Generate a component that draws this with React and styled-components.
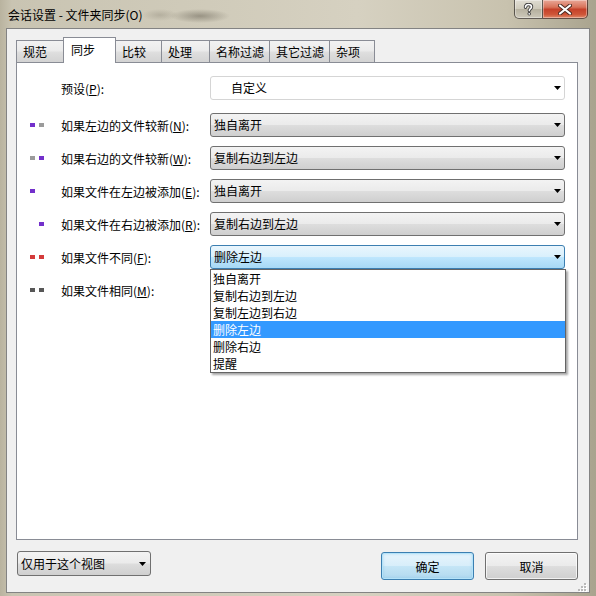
import React from 'react';
import styled, { createGlobalStyle, css } from 'styled-components';

const GlobalStyle = createGlobalStyle`
  html, body {
    margin: 0;
    padding: 0;
  }
  body {
    font-family: "Noto Sans CJK SC", "Noto Sans", sans-serif;
    font-size: 12px;
    color: #000;
    background: #c9c3b0;
  }
`;

const Window = styled.div`
  width: 596px;
  height: 596px;
  box-sizing: border-box;
  display: flex;
  flex-direction: column;
  overflow: hidden;
  background:
    radial-gradient(ellipse 30px 7px at 200px 16px, rgba(70, 64, 52, 0.4), transparent),
    radial-gradient(ellipse 18px 6px at 160px 15px, rgba(90, 84, 70, 0.22), transparent),
    linear-gradient(90deg, #b9b39f 0%, #c9c4b2 2%, #d0cbba 35%, #d6d1c1 60%, #c8c2ae 85%, #a9a38e 100%);
`;

const TitleBar = styled.div`
  height: 28px;
  flex: none;
  display: flex;
  align-items: flex-start;
  padding: 0 8px;
`;

const TitleText = styled.div`
  line-height: 28px;
  padding-top: 1px;
  white-space: nowrap;
`;

const CaptionButtons = styled.div`
  margin-left: auto;
  display: flex;
`;

const CaptionButton = styled.div`
  height: 19px;
  box-sizing: border-box;
  border: 1px solid rgba(55, 50, 45, 0.75);
  border-top: none;
  display: flex;
  align-items: center;
  justify-content: center;
  box-shadow: inset 0 0 0 1px rgba(255, 255, 255, 0.35);
  ${(p) =>
    p.$close
      ? css`
          width: 45px;
          border-left: none;
          border-radius: 0 0 5px 0;
          background: linear-gradient(#e9a898 0%, #d8735a 40%, #c5412a 52%, #cf5538 80%, #e08a6a 100%);
        `
      : css`
          width: 29px;
          border-radius: 0 0 0 5px;
          background: linear-gradient(rgba(255, 255, 255, 0.5) 0%, rgba(225, 222, 212, 0.45) 48%, rgba(170, 166, 152, 0.45) 52%, rgba(215, 212, 202, 0.55) 100%);
        `}
`;

const Client = styled.div`
  flex: 1;
  margin: 0 6px 3px;
  border: 1px solid #838383;
  background: #f0f0f0;
  display: flex;
  flex-direction: column;
  padding: 8px 11px 12px 9px;
  position: relative;
`;

const TabStrip = styled.div`
  height: 25px;
  flex: none;
  display: flex;
  align-items: flex-end;
`;

const Tab = styled.div`
  box-sizing: border-box;
  width: ${(p) => p.$w}px;
  margin-left: -1px;
  border: 1px solid #898c95;
  border-bottom: none;
  white-space: nowrap;
  &:first-child {
    margin-left: 0;
  }
  ${(p) =>
    p.$active
      ? css`
          height: 26px;
          margin-bottom: -1px;
          padding: 1px 0 0 7px;
          line-height: 22px;
          background: #fff;
          position: relative;
          z-index: 1;
        `
      : css`
          height: 22px;
          padding-left: 6px;
          line-height: 21px;
          background: linear-gradient(#f2f2f2 0%, #ebebeb 45%, #dedede 55%, #d3d3d3 100%);
        `}
`;

const Panel = styled.div`
  flex: 1;
  background: #fff;
  border: 1px solid #898c95;
  padding: 13px 12px 0 0;
`;

const Rows = styled.div`
  display: flex;
  flex-direction: column;
  gap: 9px;
`;

const Row = styled.div`
  display: flex;
  align-items: center;
  height: 24px;
  margin-bottom: ${(p) => (p.$first ? 4 : 0)}px;
`;

const Markers = styled.div`
  width: 44px;
  box-sizing: border-box;
  padding-left: 13px;
  display: flex;
  gap: 4px;
`;

const Dot = styled.span`
  width: 5px;
  height: 4px;
  background: ${(p) => p.$c || 'transparent'};
`;

const Label = styled.div`
  width: 149px;
  padding-top: 2px;
  line-height: 16px;
  white-space: nowrap;
`;

const ComboWrap = styled.div`
  position: relative;
  width: 355px;
`;

const Combo = styled.div`
  height: 24px;
  box-sizing: border-box;
  border: 1px solid #707070;
  border-radius: 3px;
  display: flex;
  align-items: center;
  justify-content: space-between;
  padding: 0 3px 0 3px;
  line-height: 16px;
  white-space: nowrap;
  background: linear-gradient(#f3f3f3 0%, #ebebeb 48%, #dddddd 52%, #cfcfcf 100%);
  ${(p) =>
    p.$variant === 'plain' &&
    css`
      border-color: #d5d5d5;
      background: #fff;
      padding-left: 20px;
    `}
  ${(p) =>
    p.$variant === 'focus' &&
    css`
      border-color: #3c7fb1;
      background: linear-gradient(#eaf6fd 0%, #d9f0fc 48%, #bee6fd 52%, #a7d9f5 100%);
    `}
`;

const DropList = styled.div`
  position: absolute;
  top: 100%;
  left: 0;
  right: -1px;
  z-index: 5;
  background: #fff;
  border: 1px solid #646464;
  box-shadow: 2px 2px 2px rgba(0, 0, 0, 0.35);
`;

const DropItem = styled.div`
  height: 17px;
  line-height: 17px;
  padding-left: 2px;
  white-space: nowrap;
  background: ${(p) => (p.$selected ? '#3399ff' : 'transparent')};
  color: ${(p) => (p.$selected ? '#fff' : '#000')};
`;

const BottomBar = styled.div`
  flex: none;
  height: 29px;
  margin-top: 11px;
  display: flex;
  align-items: flex-start;
`;

const ViewCombo = styled(Combo)`
  width: 134px;
  height: 25px;
  margin-left: 1px;
  padding-right: 4px;
`;

const Buttons = styled.div`
  margin-left: auto;
  margin-top: 1px;
  display: flex;
  gap: 11px;
`;

const Button = styled.div`
  width: 93px;
  height: 28px;
  box-sizing: border-box;
  border: 1px solid #707070;
  border-radius: 3px;
  display: flex;
  align-items: center;
  justify-content: center;
  background: linear-gradient(#f3f3f3 0%, #ebebeb 48%, #dddddd 52%, #cfcfcf 100%);
  box-shadow: inset 0 0 0 1px rgba(255, 255, 255, 0.7);
  ${(p) =>
    p.$default &&
    css`
      border-color: #3c7fb1;
      background: linear-gradient(#e8f5fc 0%, #d8eefa 48%, #c4e5f6 52%, #b2d9ef 100%);
      box-shadow: inset 0 0 0 1px #b5e3f9, inset 0 0 3px 1px rgba(90, 180, 230, 0.35);
    `}
`;

const Grip = styled.svg`
  position: absolute;
  right: 2px;
  bottom: 0;
`;

const Arrow = () => (
  <svg width="7" height="4" viewBox="0 0 7 4">
    <path d="M0 0H7L3.5 4Z" fill="#000" />
  </svg>
);

const Key = ({ label, k }) => (
  <>
    {label}(<u>{k}</u>):
  </>
);

const PURPLE = '#7330cb';
const GRAY = '#9b9b9b';
const RED = '#d43b3b';
const DARK = '#575757';

const tabs = [
  { name: '规范', w: 48 },
  { name: '同步', w: 53, active: true },
  { name: '比较', w: 47 },
  { name: '处理', w: 49 },
  { name: '名称过滤', w: 61 },
  { name: '其它过滤', w: 61 },
  { name: '杂项', w: 46 },
];

// the last row's combo sits under the open list, so its value is not shown
const rows = [
  { label: '如果左边的文件较新', k: 'N', dots: [PURPLE, GRAY], value: '独自离开' },
  { label: '如果右边的文件较新', k: 'W', dots: [GRAY, PURPLE], value: '复制右边到左边' },
  { label: '如果文件在左边被添加', k: 'E', dots: [PURPLE, null], value: '独自离开' },
  { label: '如果文件在右边被添加', k: 'R', dots: [null, PURPLE], value: '复制右边到左边' },
  { label: '如果文件不同', k: 'F', dots: [RED, RED], value: '删除左边', open: true },
  { label: '如果文件相同', k: 'M', dots: [DARK, DARK], value: '' },
];

const options = ['独自离开', '复制右边到左边', '复制左边到右边', '删除左边', '删除右边', '提醒'];

const App = () => {
  return (
    <>
      <GlobalStyle />
      <Window>
        <TitleBar>
          <TitleText>会话设置 - 文件夹同步(O)</TitleText>
          <CaptionButtons>
            <CaptionButton>
              <svg width="11" height="13" viewBox="0 0 11 13">
                <path
                  d="M2.5 4.2C2.5 2.4 3.8 1.5 5.5 1.5S8.5 2.5 8.5 4C8.5 5.6 6.3 5.8 6.3 7.6"
                  fill="none"
                  stroke="#3b3b3b"
                  strokeWidth="3.4"
                  strokeLinecap="round"
                />
                <circle cx="6.2" cy="10.8" r="1.7" fill="#3b3b3b" />
                <path
                  d="M2.5 4.2C2.5 2.4 3.8 1.5 5.5 1.5S8.5 2.5 8.5 4C8.5 5.6 6.3 5.8 6.3 7.6"
                  fill="none"
                  stroke="#fff"
                  strokeWidth="1.6"
                  strokeLinecap="round"
                />
                <circle cx="6.2" cy="10.8" r="0.9" fill="#fff" />
              </svg>
            </CaptionButton>
            <CaptionButton $close>
              <svg width="14" height="11" viewBox="0 0 14 11">
                <path d="M2 1.5L12 9.5M12 1.5L2 9.5" stroke="#4a2a22" strokeWidth="4" strokeLinecap="round" />
                <path d="M2 1.5L12 9.5M12 1.5L2 9.5" stroke="#fff" strokeWidth="2.2" strokeLinecap="round" />
              </svg>
            </CaptionButton>
          </CaptionButtons>
        </TitleBar>
        <Client>
          <TabStrip>
            {tabs.map((t) => (
              <Tab key={t.name} $w={t.w} $active={t.active}>
                {t.name}
              </Tab>
            ))}
          </TabStrip>
          <Panel>
            <Rows>
              <Row $first>
                <Markers />
                <Label>
                  <Key label="预设" k="P" />
                </Label>
                <ComboWrap>
                  <Combo $variant="plain">
                    <span>自定义</span>
                    <Arrow />
                  </Combo>
                </ComboWrap>
              </Row>
              {rows.map((r) => (
                <Row key={r.k}>
                  <Markers>
                    <Dot $c={r.dots[0]} />
                    <Dot $c={r.dots[1]} />
                  </Markers>
                  <Label>
                    <Key label={r.label} k={r.k} />
                  </Label>
                  <ComboWrap>
                    <Combo $variant={r.open ? 'focus' : undefined}>
                      <span>{r.value}</span>
                      <Arrow />
                    </Combo>
                    {r.open && (
                      <DropList>
                        {options.map((o) => (
                          <DropItem key={o} $selected={o === r.value}>
                            {o}
                          </DropItem>
                        ))}
                      </DropList>
                    )}
                  </ComboWrap>
                </Row>
              ))}
            </Rows>
          </Panel>
          <BottomBar>
            <ViewCombo>
              <span>仅用于这个视图</span>
              <Arrow />
            </ViewCombo>
            <Buttons>
              <Button $default>确定</Button>
              <Button>取消</Button>
            </Buttons>
          </BottomBar>
          <Grip width="10" height="10" viewBox="0 0 10 10">
            {[
              [7, 1],
              [4, 4],
              [7, 4],
              [1, 7],
              [4, 7],
              [7, 7],
            ].map(([x, y]) => (
              <g key={`${x}-${y}`}>
                <rect x={x + 1} y={y + 1} width="2" height="2" fill="#fff" />
                <rect x={x} y={y} width="2" height="2" fill="#b8b8b8" />
              </g>
            ))}
          </Grip>
        </Client>
      </Window>
    </>
  );
};

export default App;
